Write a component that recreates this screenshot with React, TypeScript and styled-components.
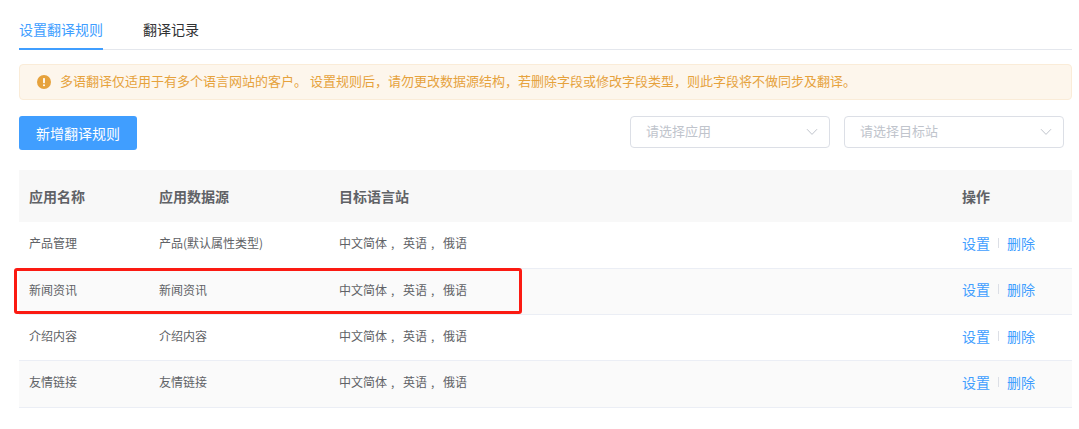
import React from "react";
import styled, { createGlobalStyle } from "styled-components";

const rows = [
  { name: "产品管理", source: "产品(默认属性类型)" },
  { name: "新闻资讯", source: "新闻资讯", marked: true },
  { name: "介绍内容", source: "介绍内容" },
  { name: "友情链接", source: "友情链接" },
];

const App = () => {
  return (
    <Page>
      <GlobalStyle />
      <Tabs>
        <Tab $active>设置翻译规则</Tab>
        <Tab>翻译记录</Tab>
      </Tabs>
      <Alert>
        <svg width="14" height="14" viewBox="0 0 14 14">
          <circle cx="7" cy="7" r="7" fill="#e6a23c" />
          <rect x="6.1" y="3" width="1.8" height="5.2" rx="0.6" fill="#fff" />
          <circle cx="7" cy="10.2" r="1" fill="#fff" />
        </svg>
        <AlertText>
          多语翻译仅适用于有多个语言网站的客户。 设置规则后，请勿更改数据源结构，若删除字段或修改字段类型，则此字段将不做同步及翻译。
        </AlertText>
      </Alert>
      <Toolbar>
        <AddButton>新增翻译规则</AddButton>
        <Filters>
          <Select $width={200}>
            <Placeholder>请选择应用</Placeholder>
            <Chevron />
          </Select>
          <Select $width={220}>
            <Placeholder>请选择目标站</Placeholder>
            <Chevron />
          </Select>
        </Filters>
      </Toolbar>
      <Table>
        <HeadRow>
          <span>应用名称</span>
          <span>应用数据源</span>
          <span>目标语言站</span>
          <span>操作</span>
        </HeadRow>
        {rows.map((row, i) => (
          <Row key={row.name} $striped={i % 2 === 1}>
            <span>{row.name}</span>
            <span>{row.source}</span>
            <span>
              中文简体<Comma>,</Comma>英语<Comma>,</Comma>俄语
            </span>
            <Actions>
              <a>设置</a>
              <Divider />
              <a>删除</a>
            </Actions>
            {row.marked && <Highlight />}
          </Row>
        ))}
      </Table>
    </Page>
  );
};

const Chevron = () => (
  <ChevronIcon width="12" height="8" viewBox="0 0 12 8">
    <path d="M1 1.2 L6 6.4 L11 1.2" fill="none" stroke="#c0c4cc" strokeWidth="1" />
  </ChevronIcon>
);

const GlobalStyle = createGlobalStyle`
  body {
    margin: 0;
    background: #fff;
    font-family: "Noto Sans CJK SC", "Liberation Sans", sans-serif;
  }
`;

const Page = styled.div`
  width: 1053px;
  margin-left: 19px;
`;

const Tabs = styled.div`
  display: flex;
  gap: 40px;
  height: 50px;
  box-sizing: border-box;
  border-bottom: 1px solid #e4e7ed;
`;

const Tab = styled.div<{ $active?: boolean }>`
  height: 50px;
  box-sizing: border-box;
  padding-top: 19px;
  font-size: 14px;
  line-height: 20px;
  color: ${(p) => (p.$active ? "#409eff" : "#303133")};
  border-bottom: 2px solid ${(p) => (p.$active ? "#409eff" : "transparent")};
`;

const Alert = styled.div`
  display: flex;
  align-items: center;
  gap: 9px;
  height: 36px;
  box-sizing: border-box;
  margin-top: 14px;
  padding-left: 17px;
  font-size: 13px;
  color: #e6a23c;
  background: #fdf6ec;
  border: 1px solid #faecd8;
  border-radius: 4px;
`;

const AlertText = styled.span`
  margin-bottom: 4px;
`;

const Toolbar = styled.div`
  display: flex;
  justify-content: space-between;
  align-items: flex-start;
  margin-top: 16px;
  padding-right: 8px;
`;

const AddButton = styled.button`
  width: 118px;
  height: 34px;
  padding: 0;
  font-family: inherit;
  font-size: 14px;
  color: #fff;
  background: #409eff;
  border: none;
  border-radius: 3px;
`;

const Filters = styled.div`
  display: flex;
  gap: 14px;
`;

const Select = styled.div<{ $width: number }>`
  display: flex;
  align-items: center;
  justify-content: space-between;
  width: ${(p) => p.$width}px;
  height: 32px;
  box-sizing: border-box;
  padding: 0 11px 0 15px;
  font-size: 13px;
  color: #c0c4cc;
  border: 1px solid #dcdfe6;
  border-radius: 4px;
`;

const Placeholder = styled.span`
  margin-bottom: 4px;
`;

const ChevronIcon = styled.svg`
  display: block;
`;

const Table = styled.div`
  margin-top: 20px;
`;

const columns = "130px 180px 623px 110px";

const HeadRow = styled.div`
  display: grid;
  grid-template-columns: ${columns};
  align-items: center;
  height: 52.3px;
  padding-left: 10px;
  box-sizing: border-box;
  font-size: 14px;
  font-weight: 700;
  color: #606266;
  background: #f8f8f8;
`;

const Row = styled.div<{ $striped: boolean }>`
  position: relative;
  display: grid;
  grid-template-columns: ${columns};
  align-items: center;
  height: 46.34px;
  padding: 0 0 4px 10px;
  box-sizing: border-box;
  font-size: 12px;
  color: #606266;
  background: ${(p) => (p.$striped ? "#fafafa" : "#fff")};
  border-bottom: 1px solid #ebeef5;
`;

const Comma = styled.span`
  display: inline-block;
  width: 16px;
  padding-left: 4px;
  box-sizing: border-box;
  text-align: left;
`;

const Actions = styled.div`
  display: flex;
  align-items: center;
  gap: 8px;
  font-size: 14px;
  color: #409eff;
`;

const Divider = styled.i`
  width: 1px;
  height: 10px;
  background: #dcdfe6;
`;

const Highlight = styled.div`
  position: absolute;
  left: -5px;
  top: -1px;
  width: 508px;
  height: 46px;
  box-sizing: border-box;
  border: 3px solid #fb1a12;
  border-radius: 3px;
`;

export default App;
